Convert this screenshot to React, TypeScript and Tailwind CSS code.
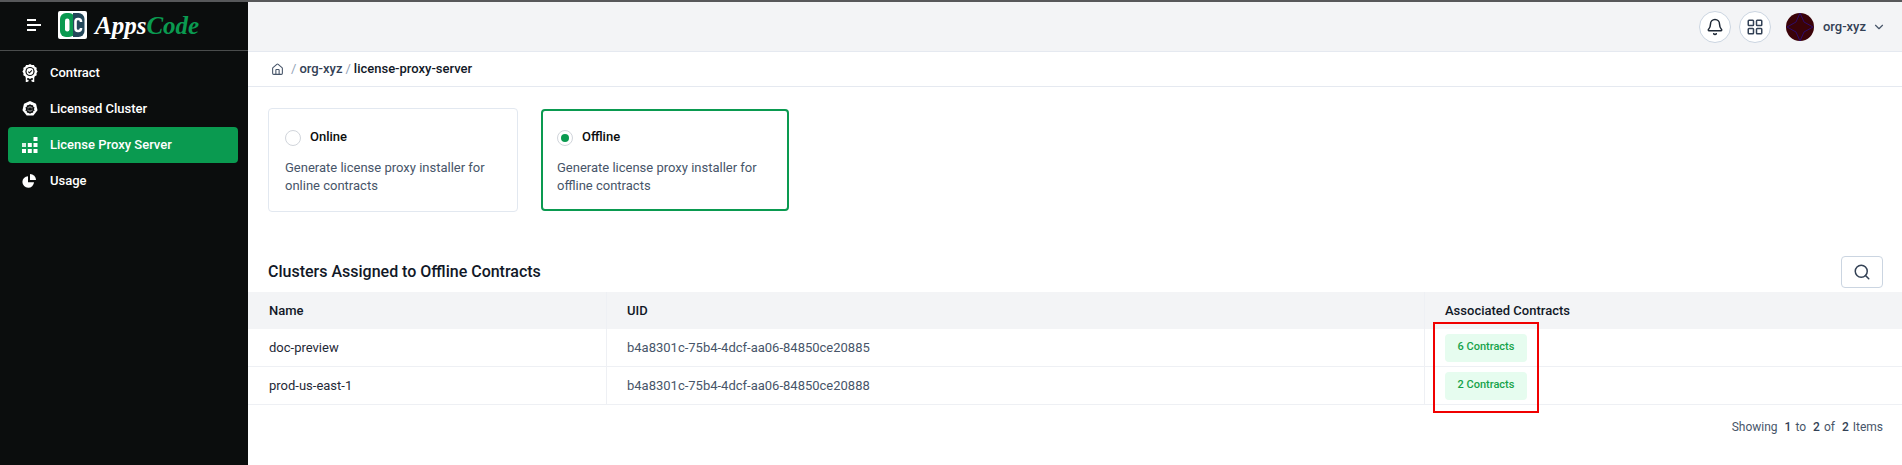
import { Bell, ChevronDown, House, LayoutGrid, Search } from 'lucide-react';

function ContractIcon() {
    return (
        <svg width="16" height="18" viewBox="0 0 16 18" fill="none">
            <path d="M4.500 12v5.500l2-1.200M11.500 12v5.500l-2-1.200" stroke="#fff" strokeWidth="1.500" />
            <path d="M8 0l1.800 1.100 2.100-.2.900 1.900 1.900.9-.2 2.100L15.600 7.500l-1.100 1.700.2 2.100-1.900.9-.9 1.900-2.100-.2L8 15l-1.800-1.100-2.100.2-.9-1.900-1.900-.9.2-2.100L.4 7.500l1.100-1.700-.2-2.100 1.900-.9.900-1.900 2.100.2z" fill="#fff" />
            <circle cx="8" cy="7.500" r="4.600" fill="#0b0d0d" />
            <circle cx="8" cy="7.500" r="3.400" fill="#fff" />
            <path d="M6.300 7.600l1.200 1.200 2.300-2.500" stroke="#0b0d0d" strokeWidth="1.100" />
        </svg>
    );
}

function ClusterIcon() {
    return (
        <svg width="16" height="16" viewBox="0 0 17 17" fill="none">
            <path d="M8.500 0l6.400 3 1.600 6.900-4.400 5.600-7.100 0L.5 9.900 2.100 3z" fill="#fff" />
            <circle cx="8.500" cy="8.500" r="3.600" stroke="#0b0d0d" strokeWidth="1.600" />
            <path d="M8.500 3.500v10M3.700 7.200l9.600 2.700M13.300 7.200l-9.600 2.700M5.500 12.500l6-8M11.500 12.500l-6-8" stroke="#0b0d0d" strokeWidth="1" />
        </svg>
    );
}

function ProxyIcon() {
    return (
        <svg width="16" height="16" viewBox="0 0 16 16" fill="#fff">
            <rect x="11.500" y="0" width="4" height="4" />
            <rect x="5.800" y="6" width="4" height="4" />
            <rect x="11.500" y="6" width="4" height="4" />
            <rect x="0" y="6" width="4" height="4" opacity="0.85" />
            <rect x="0" y="12" width="4" height="4" />
            <rect x="5.800" y="12" width="4" height="4" />
            <rect x="11.500" y="12" width="4" height="4" />
        </svg>
    );
}

function UsageIcon() {
    return (
        <svg width="14" height="14" viewBox="0 0 14 14" fill="#fff">
            <path d="M6 2.200A5.800 5.800 0 1 0 12 8.200H6z" />
            <path d="M8 0a6 6 0 0 1 6 6H8z" />
        </svg>
    );
}

function Logo() {
    return (
        <div className="flex items-center gap-[8px]">
            <div className="flex h-[28px] w-[29px] items-center justify-center rounded-[2px] bg-white">
                <svg width="25" height="24" viewBox="0 0 25 24" fill="none">
                    <rect x="0" y="0" width="15" height="24" rx="6" fill="#0a9a50" />
                    <path d="M13 0h5.500a6 6 0 0 1 6 6v12a6 6 0 0 1-6 6H13z" fill="#24485a" />
                    <rect x="5" y="5.500" width="4.500" height="13" rx="2.200" fill="#fff" />
                    <path d="M21 9V8.500a2.500 2.500 0 0 0-2.500-2.500h-.500a2.500 2.500 0 0 0-2.500 2.500v7a2.500 2.500 0 0 0 2.500 2.500h.500a2.500 2.500 0 0 0 2.500-2.500V15" stroke="#fff" strokeWidth="2.600" />
                </svg>
            </div>
            <span className="font-['Liberation_Serif',serif] text-[25px] font-bold italic leading-none tracking-[0px] text-white">
                Apps<span className="text-[#0a9a50]">Code</span>
            </span>
        </div>
    );
}

function Sidebar() {
    const items = [
        { label: 'Contract', icon: <ContractIcon /> },
        { label: 'Licensed Cluster', icon: <ClusterIcon /> },
        { label: 'License Proxy Server', icon: <ProxyIcon />, active: true },
        { label: 'Usage', icon: <UsageIcon /> },
    ];

    return (
        <aside className="w-[248px] shrink-0 bg-[#0b0d0d]">
            <div className="flex h-[49px] items-center gap-[17px] border-b border-[#4a4c4c] pb-[2px] pl-[27px]">
                <div className="flex flex-col gap-[3px]">
                    <span className="h-[2px] w-[9px] bg-white" />
                    <span className="h-[2px] w-[14px] bg-white" />
                    <span className="h-[2px] w-[9px] bg-white" />
                </div>
                <Logo />
            </div>
            <nav className="pl-[8px] pr-[10px] pt-[4px]">
                {items.map((item) => (
                    <div
                        key={item.label}
                        className={`flex h-[36px] items-center rounded-[4px] pl-[14px] text-[13px] font-medium text-white ${item.active ? 'bg-[#0a9a50]' : ''}`}
                    >
                        <span className="flex w-[28px] shrink-0 items-center">{item.icon}</span>
                        {item.label}
                    </div>
                ))}
            </nav>
        </aside>
    );
}

function Header() {
    return (
        <header className="flex h-[50px] items-center justify-end border-b border-[#e5e9f0] bg-[#f3f4f6] pr-[16px]">
            <button className="flex size-[32px] items-center justify-center rounded-full border border-[#cbd5e1] bg-white text-[#1f2937]">
                <Bell size={18} />
            </button>
            <button className="ml-[8px] flex size-[32px] items-center justify-center rounded-full border border-[#cbd5e1] bg-white text-[#334155]">
                <LayoutGrid size={18} />
            </button>
            <svg width="28" height="28" viewBox="0 0 28 28" className="ml-[15px]">
                <circle cx="14" cy="14" r="14" fill="#3a0208" />
                <path d="M14 0l4 9 9 5-9 5-4 9-4-9-9-5 9-5z" fill="none" stroke="#2e0b6a" strokeWidth="1" />
            </svg>
            <span className="ml-[9px] text-[13px] font-medium text-[#334155]">org-xyz</span>
            <ChevronDown size={14} className="ml-[6px] text-[#475569]" />
        </header>
    );
}

function OptionCard({ title, text, selected }: { title: string; text: string; selected?: boolean }) {
    return (
        <div className={`rounded-[4px] bg-white ${selected ? 'my-[1px] h-[102px] w-[248px] border-2 border-[#0a9a50] pl-[14px] pt-[17px]' : 'h-[104px] w-[250px] border border-[#e2e8f0] pl-[16px] pt-[19px]'}`}>
            <div className="flex items-center">
                <span className="flex size-[16px] items-center justify-center rounded-full border border-[#d1d5db] bg-white">
                    {selected && <span className="size-[8px] rounded-full bg-[#0a9a50]" />}
                </span>
                <span className="mb-[2px] ml-[9px] text-[13px] font-medium leading-[18px] text-[#0b0d0d]">{title}</span>
            </div>
            <p className="mt-[10.5px] w-[210px] text-[13px] leading-[18px] text-[#475569]">{text}</p>
        </div>
    );
}

function Badge({ children }: { children: string }) {
    return (
        <span className="flex h-[28px] w-[82px] items-center justify-center rounded-[4px] bg-[#e6fcef] text-[11px] font-medium text-[#16a34a]">
            {children}
        </span>
    );
}

function ClusterTable() {
    const rows = [
        { name: 'doc-preview', uid: 'b4a8301c-75b4-4dcf-aa06-84850ce20885', contracts: '6 Contracts' },
        { name: 'prod-us-east-1', uid: 'b4a8301c-75b4-4dcf-aa06-84850ce20888', contracts: '2 Contracts' },
    ];

    return (
        <div className="relative">
            <div className="grid h-[37px] grid-cols-[358px_818px_1fr] items-center bg-[#f3f4f6] text-[13px] font-medium text-[#111827]">
                <div className="pl-[21px]">Name</div>
                <div className="flex h-full items-center border-l border-[#eef0f4] pl-[20px]">UID</div>
                <div className="flex h-full items-center border-l border-[#eef0f4] pl-[20px]">Associated Contracts</div>
            </div>
            {rows.map((row) => (
                <div key={row.name} className="grid h-[38px] grid-cols-[358px_818px_1fr] items-center border-b border-[#eef0f4] text-[13px]">
                    <div className="pl-[21px] text-[#1f2937]">{row.name}</div>
                    <div className="flex h-full items-center border-l border-[#eef0f4] pl-[20px] text-[#475569]">{row.uid}</div>
                    <div className="flex h-full items-center border-l border-[#eef0f4] pl-[20px]">
                        <Badge>{row.contracts}</Badge>
                    </div>
                </div>
            ))}
            {/* red annotation box from the screenshot */}
            <div className="absolute left-[1185px] top-[30px] h-[91px] w-[106px] border-2 border-[#f00000]" />
        </div>
    );
}

export default function App() {
    return (
        <div className="h-[465px] overflow-hidden border-t-2 border-[#57585a] bg-white font-['Roboto',sans-serif]">
            <div className="flex h-full">
                <Sidebar />
                <main className="min-w-0 flex-1">
                    <Header />
                    <div className="flex h-[35px] items-center border-b border-[#e5e9f0] pl-[23px] text-[13px]">
                        <House size={13} className="text-[#475569]" />
                        <span className="ml-[7px] text-[#94a3b8]">/</span>
                        <span className="ml-[3px] font-medium text-[#334155]">org-xyz</span>
                        <span className="mx-[3px] text-[#94a3b8]">/</span>
                        <span className="font-medium text-[#111827]">license-proxy-server</span>
                    </div>
                    <div className="flex gap-[23px] pl-[20px] pt-[21px]">
                        <OptionCard title="Online" text="Generate license proxy installer for online contracts" />
                        <OptionCard title="Offline" text="Generate license proxy installer for offline contracts" selected />
                    </div>
                    <div className="mb-[4px] mt-[44px] flex h-[32px] items-center justify-between pl-[20px] pr-[19px]">
                        <h2 className="text-[16px] font-medium text-[#111827]">Clusters Assigned to Offline Contracts</h2>
                        <button className="flex h-[32px] w-[42px] items-center justify-center rounded-[4px] border border-[#cbd5e1] bg-white text-[#334155]">
                            <Search size={18} />
                        </button>
                    </div>
                    <ClusterTable />
                    <div className="mt-[14px] flex justify-end gap-[4px] pr-[19px] text-[12px] leading-[16px] text-[#475569]">
                        <span>Showing</span>
                        <span className="ml-[3px] font-medium text-[#334155]">1</span>
                        <span>to</span>
                        <span className="ml-[3px] font-medium text-[#334155]">2</span>
                        <span>of</span>
                        <span className="ml-[3px] font-medium text-[#334155]">2</span>
                        <span>Items</span>
                    </div>
                </main>
            </div>
        </div>
    );
}
